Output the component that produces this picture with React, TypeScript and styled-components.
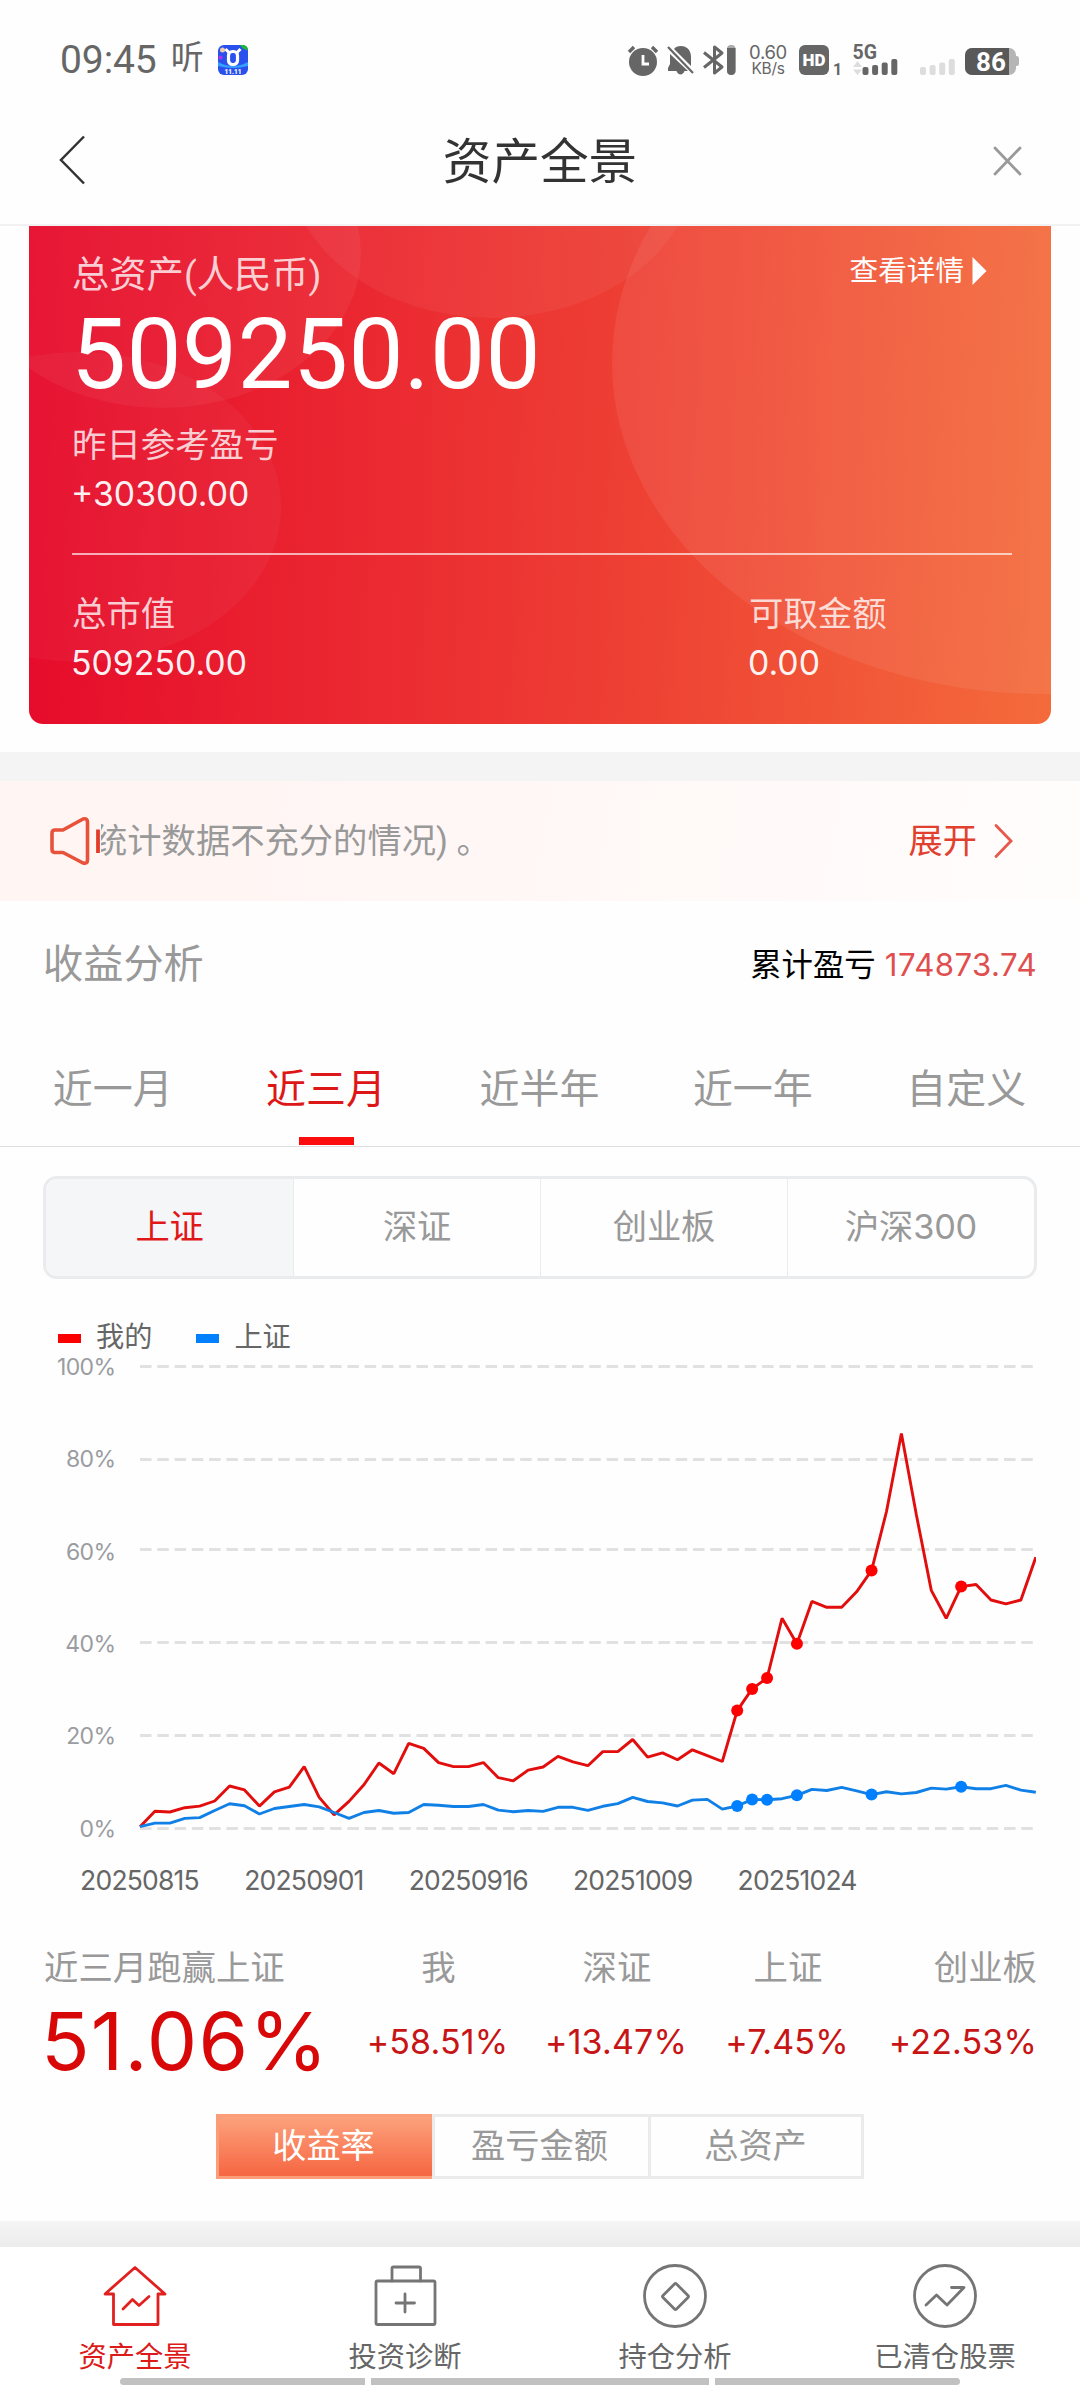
import React from "react";
import styled, { createGlobalStyle, css } from "styled-components";

const GlobalStyle = createGlobalStyle`
  * { box-sizing: border-box; }
  body {
    margin: 0;
    background: #fefefe;
    font-family: Roboto, "Noto Sans CJK SC", sans-serif;
    font-weight: 400;
  }
`;

const figures = css`
  font-family: Inter, "Noto Sans CJK SC", sans-serif;
`;

const Screen = styled.main`
  position: relative;
  display: flex;
  flex-direction: column;
  width: 1080px;
  height: 2388px;
  overflow: hidden;
  background: #fefefe;
  white-space: nowrap;
`;

/* ---------- status bar ---------- */

const StatusBar = styled.div`
  display: flex;
  align-items: center;
  height: 119px;
  padding: 0 61px 0 60px;
  color: #666;
`;

const Clock = styled.span`
  font-size: 39px;
  line-height: 40px;
  letter-spacing: -0.1px;
`;

const Listen = styled.span`
  margin: -4px 0 0 14px;
  width: 33px;
  font-size: 33px;
  line-height: 40px;
  font-weight: 400;
`;

const StatusIcon = styled.svg<{ $gap: number }>`
  flex: none;
  display: block;
  height: 32px;
  margin-left: ${(p) => p.$gap}px;
  fill: #666;
  overflow: visible;
`;

const StatusSpacer = styled.span`
  flex: 1;
`;

const NetSpeed = styled.div`
  ${figures}
  display: flex;
  flex-direction: column;
  align-items: center;
  width: 40px;
  margin-left: 12px;
  font-size: 18.5px;
  line-height: 17px;
  letter-spacing: -0.3px;
`;

const NetUnit = styled.span`
  font-size: 15.5px;
  line-height: 15px;
`;

/* ---------- header ---------- */

const Header = styled.header`
  display: grid;
  grid-template-columns: 150px 1fr 150px;
  align-items: center;
  height: 107px;
  padding-bottom: 24px;
  border-bottom: 2px solid #f2f2f2;
`;

const Title = styled.h1`
  margin: 6px 0 0;
  color: #333;
  font-size: 48.6px;
  line-height: 60px;
  font-weight: 400;
  text-align: center;
`;

const BackIcon = styled.svg`
  display: block;
  margin-left: 58px;
`;

const CloseIcon = styled.svg`
  display: block;
  margin: 3px 0 0 63px;
`;

/* ---------- asset card ---------- */

const Card = styled.section`
  position: relative;
  flex: none;
  height: 498px;
  margin: 0 29px 28px;
  overflow: hidden;
  border-radius: 0 0 14px 14px;
  color: #fff;
  background: linear-gradient(92deg, #e60a2b 0%, #eb2a31 35%, #ee4334 62%, #f46b3b 100%);
`;

const CardArt = styled.svg`
  position: absolute;
  inset: 0;
`;

const CardBody = styled.div`
  position: relative;
  padding: 24px 39px 0 43px;
`;

const CardTop = styled.div`
  display: flex;
  justify-content: space-between;
  height: 50px;
`;

const CardLabel = styled.div<{ $large?: boolean }>`
  height: 50px;
  line-height: 50px;
  font-size: ${(p) => (p.$large ? 37.3 : 34.4)}px;
  color: rgba(255, 255, 255, 0.78);
`;

const DetailLink = styled.div`
  display: flex;
  align-items: center;
  gap: 8px;
  height: 42px;
  margin-right: 25px;
  font-size: 28.6px;
  line-height: 42px;
`;

const Total = styled.div`
  height: 110px;
  margin: 0 0 10px -1px;
  font-size: 98px;
  line-height: 110px;
  letter-spacing: 0.4px;
`;

const CardValue = styled.div`
  ${figures}
  height: 48px;
  margin-left: -1px;
  font-size: 33.8px;
  line-height: 48px;
  color: rgba(255, 255, 255, 0.95);
`;

const CardRule = styled.div`
  height: 2px;
  margin: 35px 0 34px;
  background: rgba(255, 255, 255, 0.65);
`;

const CardColumns = styled.div`
  display: grid;
  grid-template-columns: 677px 1fr;
`;

/* ---------- notice ---------- */

const Band = styled.div<{ $height: number; $shade?: boolean }>`
  flex: none;
  height: ${(p) => p.$height}px;
  background: ${(p) => (p.$shade ? "linear-gradient(#f5f5f5, #ececec)" : "#f4f4f4")};
`;

const Notice = styled.div`
  display: flex;
  align-items: center;
  height: 120px;
  padding: 0 66px 0 48px;
  background: linear-gradient(100deg, #fff5f2 0%, #fff7f6 45%, #fffdfc 100%);
`;

const NoticeClip = styled.div`
  flex: 1;
  display: flex;
  overflow: hidden;
  margin-left: 1px;
`;

const NoticeText = styled.span`
  margin-left: -8px;
  color: #999;
  font-size: 34.3px;
  line-height: 56px;
`;

const Expand = styled.span`
  display: flex;
  align-items: center;
  gap: 17px;
  color: #e2402e;
  font-size: 34.2px;
  line-height: 56px;
`;

/* ---------- analysis ---------- */

const SectionHead = styled.div`
  display: flex;
  align-items: center;
  justify-content: space-between;
  height: 128px;
  padding: 0 43px 0 43px;
`;

const SectionTitle = styled.h2`
  margin: 0;
  color: #999;
  font-size: 40.2px;
  line-height: 60px;
  font-weight: 400;
`;

const Profit = styled.div`
  color: #000;
  font-size: 31.4px;
  line-height: 60px;

  em {
    ${figures}
    margin-left: 9px;
    color: #e04f4f;
    font-style: normal;
    font-size: 31.2px;
    letter-spacing: 0.45px;
  }
`;

const Tabs = styled.nav`
  display: grid;
  grid-template-columns: repeat(5, 213.4px);
  justify-content: center;
  height: 118px;
  padding-right: 1px;
  border-bottom: 1px solid #dedede;
`;

const Tab = styled.div<{ $active?: boolean }>`
  display: flex;
  flex-direction: column;
  align-items: center;
  justify-content: space-between;
  padding: 33px 0 1px;
  font-size: 40px;
  line-height: 56px;
  color: ${(p) => (p.$active ? "#dd1717" : "#999")};

  ${(p) =>
    p.$active &&
    css`
      &::after {
        content: "";
        width: 55px;
        height: 8px;
        background: #fb0d0d;
      }
    `}
`;

const Segments = styled.div`
  display: grid;
  grid-template-columns: repeat(4, 1fr);
  flex: none;
  height: 103px;
  margin: 29px 43px 0;
  overflow: hidden;
  border: 3px solid #e9ebec;
  border-radius: 14px;
`;

const Segment = styled.div<{ $active?: boolean }>`
  ${figures}
  padding-top: 1px;
  text-align: center;
  font-size: 34.3px;
  line-height: 94px;
  letter-spacing: -0.2px;
  color: ${(p) => (p.$active ? "#e11818" : "#999")};
  background: ${(p) => (p.$active ? "#f4f6f8" : "transparent")};

  & + & {
    border-left: 1px solid #ebebeb;
  }
`;

/* ---------- chart ---------- */

const ChartBlock = styled.section`
  flex: none;
  height: 639px;
  padding-top: 39px;
`;

const Legend = styled.div`
  display: flex;
  gap: 44px;
  height: 39px;
  padding-left: 58px;
`;

const LegendItem = styled.span<{ $color: string }>`
  display: flex;
  align-items: center;
  gap: 15px;
  height: 40px;
  color: #666;
  font-size: 28.2px;
  line-height: 40px;

  &::before {
    content: "";
    width: 23px;
    height: 9px;
    background: ${(p) => p.$color};
  }
`;

const ChartSvg = styled.svg`
  display: block;
  overflow: visible;
  font-family: Inter, sans-serif;
`;

/* ---------- results ---------- */

const Results = styled.section`
  display: flex;
  flex: none;
  height: 156px;
  padding: 23px 43px 0 44px;
`;

const Result = styled.div<{ $width: number; $align?: string }>`
  width: ${(p) => p.$width}px;
  display: flex;
  flex-direction: column;
  align-items: ${(p) => p.$align ?? "center"};
`;

const ResultLabel = styled.div`
  height: 54px;
  color: #999;
  font-size: 34.4px;
  line-height: 54px;
`;

const ResultValue = styled.div`
  ${figures}
  height: 94px;
  margin-left: -2px;
  color: #c71414;
  font-size: 34px;
  line-height: 93px;
  letter-spacing: 0.15px;
`;

const MainValue = styled.div`
  ${figures}
  height: 94px;
  margin-left: -3px;
  color: #d90808;
  font-size: 80px;
  line-height: 92px;
  letter-spacing: 1.2px;
`;

const Modes = styled.div`
  display: grid;
  grid-template-columns: repeat(3, 216px);
  align-self: center;
  flex: none;
  height: 64px;
  margin: 40px 0 43px;
`;

const Mode = styled.div<{ $active?: boolean }>`
  padding-right: 4px;
  border: 3px solid #ebebeb;
  border-right-width: 0;
  text-align: center;
  font-size: 34.2px;
  line-height: 59px;
  color: #999;

  &:last-child {
    padding-right: 1px;
    border-right-width: 3px;
  }

  ${(p) =>
    p.$active &&
    css`
      color: #fff;
      border-color: #fb9d79;
      background: linear-gradient(#fca27c, #f66642);
    `}
`;

/* ---------- bottom navigation ---------- */

const BottomNav = styled.nav`
  display: grid;
  grid-template-columns: repeat(4, 270px);
  flex: 1;
  background: #fff;
`;

const NavItem = styled.div<{ $active?: boolean }>`
  display: flex;
  flex-direction: column;
  align-items: center;
  padding-top: 15px;
  color: ${(p) => (p.$active ? "#dc1a1a" : "#666")};
  font-size: 28.3px;
  line-height: 44px;

  svg {
    display: block;
    margin-bottom: 6px;
    fill: none;
    stroke: ${(p) => (p.$active ? "#e12020" : "#757575")};
    stroke-width: 2.8;
    stroke-linejoin: round;
    stroke-linecap: round;
  }
`;

const GestureBar = styled.div`
  position: absolute;
  left: 120px;
  bottom: 3px;
  display: grid;
  grid-template-columns: 245px 338px 245px;
  gap: 6px;
  height: 7px;
`;

const GesturePart = styled.span`
  background: #c1c1c1;

  &:first-child { border-radius: 4px 0 0 4px; }
  &:last-child { border-radius: 0 4px 4px 0; }
`;

/* ---------- data ---------- */

const mine = [
  1826.7, 1811.3, 1812, 1807.7, 1806.1, 1801, 1786, 1789.9, 1806.1, 1791.9, 1787.2, 1766.6, 1797.4,
  1814.8, 1801.4, 1784.8, 1763, 1773.7, 1743.3, 1748.4, 1762.6, 1766.6, 1766.6, 1762.6, 1777.7, 1780.8,
  1770.1, 1767, 1756.4, 1761.9, 1765.7, 1751.6, 1751.6, 1739.5, 1757.1, 1752.9, 1759.8, 1749.8, 1755.7,
  1761.5, 1710.6, 1688.9, 1677.9, 1618.3, 1643.8, 1601.4, 1607.3, 1607.3, 1591.8, 1570.4, 1511.5,
  1433.4, 1515, 1590.4, 1618.3, 1586.6, 1584.5, 1600, 1603.8, 1600, 1557.3,
];

const index = [
  1826.7, 1823.1, 1823.1, 1818.4, 1817.6, 1810.5, 1803.8, 1805.7, 1814, 1808.5, 1806.5, 1804.5, 1806.9,
  1812.5, 1818.4, 1812.5, 1810.5, 1813.2, 1812.5, 1804.5, 1805.3, 1806.5, 1806.5, 1804.5, 1810.1,
  1811.7, 1810.5, 1811.4, 1807.3, 1807.3, 1810.4, 1806.3, 1803.6, 1797.4, 1801.5, 1802.9, 1806, 1800.1,
  1799.4, 1809.1, 1806, 1799.4, 1799.8, 1798.7, 1795.3, 1789.4, 1790.5, 1787.4, 1790.8, 1794.6, 1791.8,
  1793.9, 1792.5, 1788.1, 1789.1, 1786.7, 1788.7, 1788.7, 1785.3, 1790.1, 1792.2,
];

const trades = [40, 41, 42, 44, 49, 55];
const gridLines = [1366.5, 1459.5, 1549.5, 1642.5, 1735.5, 1828.5];
const ticks = ["100%", "80%", "60%", "40%", "20%", "0%"];
const dates = ["20250815", "20250901", "20250916", "20251009", "20251024"];

const chartTop = 1357;
const px = (i: number) => 140 + i * 14.93;
const toPoints = (values: number[]) =>
  values.map((v, i) => `${px(i).toFixed(1)},${(v - chartTop).toFixed(1)}`).join(" ");

const Chart = () => (
  <ChartSvg width="1080" height="561" viewBox="0 0 1080 561">
    {gridLines.map((y, i) => (
      <React.Fragment key={y}>
        <line x1="140" x2="1036" y1={y - chartTop} y2={y - chartTop} stroke="#e1e1e1" strokeWidth="3" strokeDasharray="11.52 5.76" />
        <text x="115.500" y={1375 + i * 92.3 - chartTop} textAnchor="end" fontSize="23" letterSpacing="-0.600" fill="#9a9ca1">
          {ticks[i]}
        </text>
      </React.Fragment>
    ))}
    {dates.map((d, i) => (
      <text key={d} x={139.5 + i * 164.4} y={1890 - chartTop} textAnchor="middle" fontSize="26.500" letterSpacing="-0.800" fill="#666">
        {d}
      </text>
    ))}
    <svg x="0" y="0" width="1036" height="561">
      <polyline points={toPoints(mine)} fill="none" stroke="#e20d0d" strokeWidth="2.9" strokeLinejoin="bevel" />
      <polyline points={toPoints(index)} fill="none" stroke="#1180e6" strokeWidth="2.9" strokeLinejoin="bevel" />
      {trades.map((i) => (
        <React.Fragment key={i}>
          <circle cx={px(i)} cy={mine[i] - chartTop} r="6" fill="#ff0000" />
          <circle cx={px(i)} cy={index[i] - chartTop} r="6" fill="#0080ff" />
        </React.Fragment>
      ))}
    </svg>
  </ChartSvg>
);

const StatusIcons = () => (
  <>
    <StatusIcon $gap={0} width="32" viewBox="0 0 32 32">
      <circle cx="16" cy="18" r="14" />
      <path d="M2 8 L7 3 M25 3 L30 8" stroke="#666" strokeWidth="3.4" />
      <path d="M16 11 V20 H22" fill="none" stroke="#fff" strokeWidth="2.8" />
    </StatusIcon>
    <StatusIcon $gap={7} width="30" viewBox="0 0 30 32">
      <path d="M8 5 C11 0 25 0 25 13 V22 Z" />
      <path d="M4 10 L22 27 H18.500 C17 31.500 12 31.500 10.500 27 H2 V24 L4 20 Z" />
      <path d="M2 3 L27 29" stroke="#666" strokeWidth="2.2" />
    </StatusIcon>
    <StatusIcon $gap={6} width="34" viewBox="0 0 34 32">
      <path d="M2 8.500 L20 23 L12.500 29 V3 L20 9 L2 23.500" fill="none" stroke="#666" strokeWidth="3" strokeLinejoin="round" />
      <rect x="25" y="1" width="8.500" height="30" rx="4" fill="#aaa" />
      <path d="M25 4 H33.500 V27 A4.200 4 0 0 1 25 27 Z" />
    </StatusIcon>
    <NetSpeed>
      <span>0.60</span>
      <NetUnit>KB/s</NetUnit>
    </NetSpeed>
    <StatusIcon $gap={11} width="42" viewBox="0 0 42 32">
      <rect x="0" y="1" width="30" height="30" rx="6" />
      <text x="15" y="22" textAnchor="middle" fontSize="17" fontWeight="900" fill="#fff">HD</text>
      <text x="34" y="31" fontSize="16" fontWeight="700">1</text>
    </StatusIcon>
    <StatusIcon $gap={12} width="46" viewBox="0 0 46 32">
      <text x="-0.500" y="15" fontSize="19.500" fontWeight="700">5G</text>
      <path d="M0 23 L4.500 17 L9 23 Z M0 25.500 H9 L4.500 31 Z" fill="#ddd" />
      {[23, 21, 18.5, 15].map((y, i) => (
        <rect key={y} x={9.5 + i * 9.6} y={y} width="6" height={31 - y} rx="2" />
      ))}
    </StatusIcon>
    <StatusIcon $gap={21} width="36" viewBox="0 0 36 32">
      {[23, 21, 18.5, 15].map((y, i) => (
        <rect key={y} x={i * 9.6} y={y} width="6" height={31 - y} rx="2" fill="#ddd" />
      ))}
    </StatusIcon>
    <StatusIcon $gap={9} width="54" viewBox="0 0 54 32">
      <rect x="0" y="4" width="51" height="27" rx="7" fill="#b5b5b5" />
      <rect x="49" y="12" width="5" height="10" rx="2.500" fill="#b5b5b5" />
      <path d="M7 4 H44 V31 H7 A7 7 0 0 1 0 24 V11 A7 7 0 0 1 7 4 Z" fill="#595959" />
      <text x="26" y="27" textAnchor="middle" fontSize="26" fontWeight="700" fill="#fff">86</text>
    </StatusIcon>
  </>
);

export default function App() {
  return (
    <>
      <GlobalStyle />
      <Screen>
        <StatusBar>
          <Clock>09:45</Clock>
          <Listen>听</Listen>
          <StatusIcon $gap={14} width="30" viewBox="0 0 30 32">
            <rect x="0" y="1" width="30" height="30" rx="6" fill="#2a50ee" />
            <path d="M0 18 Q15 26 30 18 V22 Q15 26 0 22 Z" fill="#35a0ff" />
            <path d="M22 1 H26 Q30 2 30 6 Q25 6 22 1 Z" fill="#1fb53a" />
            <circle cx="4.500" cy="6" r="2.500" fill="#efc9b0" />
            <circle cx="2.500" cy="13.500" r="2" fill="#bd2de0" />
            <rect x="10.500" y="7.500" width="9" height="13" rx="4" fill="#2a50ee" stroke="#fff" strokeWidth="3.200" />
            <path d="M7.500 5 L11 8.500 M22.500 5 L19 8.500" stroke="#fff" strokeWidth="3" />
            <text x="15" y="29.500" textAnchor="middle" fontSize="6.500" fontWeight="900" fill="#fff">11.11</text>
          </StatusIcon>
          <StatusSpacer />
          <StatusIcons />
        </StatusBar>

        <Header>
          <BackIcon width="28" height="50" viewBox="0 0 28 50">
            <path d="M26 1.500 L3 25 L26 48.500" fill="none" stroke="#333" strokeWidth="2.500" />
          </BackIcon>
          <Title>资产全景</Title>
          <CloseIcon width="30" height="30" viewBox="0 0 30 30">
            <path d="M2 2 L27 28 M27 2 L2 28" stroke="#999" strokeWidth="2.800" strokeLinecap="round" />
          </CloseIcon>
        </Header>

        <Card>
          <CardArt width="1022" height="498" viewBox="29 226 1022 498">
            <g fill="#fff">
              <ellipse cx="162" cy="253" rx="199" ry="155" fillOpacity="0.05" />
              <ellipse cx="492" cy="161" rx="204" ry="157" fillOpacity="0.05" />
              <ellipse cx="79" cy="507" rx="202" ry="155" fillOpacity="0.04" />
              <ellipse cx="1045" cy="363" rx="433" ry="331" fillOpacity="0.07" />
            </g>
          </CardArt>
          <CardBody>
            <CardTop>
              <CardLabel $large>总资产(人民币)</CardLabel>
              <DetailLink>
                查看详情
                <svg width="15" height="30" viewBox="0 0 15 30">
                  <path d="M0.500 1 L14.500 15 L0.500 29 Z" fill="#fff" />
                </svg>
              </DetailLink>
            </CardTop>
            <Total>509250.00</Total>
            <CardLabel>昨日参考盈亏</CardLabel>
            <CardValue>+30300.00</CardValue>
            <CardRule />
            <CardColumns>
              <div>
                <CardLabel>总市值</CardLabel>
                <CardValue>509250.00</CardValue>
              </div>
              <div>
                <CardLabel>可取金额</CardLabel>
                <CardValue>0.00</CardValue>
              </div>
            </CardColumns>
          </CardBody>
        </Card>

        <Band $height={29} />

        <Notice>
          <svg width="52" height="52" viewBox="0 0 52 52">
            <path
              d="M4 18 Q4 15 7 15 H15 L35 4 Q39.500 3 39.500 7 V45 Q39.500 49 35 48 L15 37.500 H7 Q4 37.500 4 34.500 Z"
              fill="none"
              stroke="#e8513a"
              strokeWidth="3.600"
              strokeLinejoin="round"
            />
            <path d="M50 14.500 V38" stroke="#e23b2c" strokeWidth="3.800" />
          </svg>
          <NoticeClip>
            <NoticeText>统计数据不充分的情况) 。</NoticeText>
          </NoticeClip>
          <Expand>
            展开
            <svg width="20" height="36" viewBox="0 0 20 36">
              <path d="M2 2.500 L17 18 L2 33.500" fill="none" stroke="#e8574a" strokeWidth="2.800" strokeLinecap="round" />
            </svg>
          </Expand>
        </Notice>

        <SectionHead>
          <SectionTitle>收益分析</SectionTitle>
          <Profit>
            累计盈亏<em>174873.74</em>
          </Profit>
        </SectionHead>

        <Tabs>
          <Tab>近一月</Tab>
          <Tab $active>近三月</Tab>
          <Tab>近半年</Tab>
          <Tab>近一年</Tab>
          <Tab>自定义</Tab>
        </Tabs>

        <Segments>
          <Segment $active>上证</Segment>
          <Segment>深证</Segment>
          <Segment>创业板</Segment>
          <Segment>沪深300</Segment>
        </Segments>

        <ChartBlock>
          <Legend>
            <LegendItem $color="#fb0000">我的</LegendItem>
            <LegendItem $color="#0080ff">上证</LegendItem>
          </Legend>
          <Chart />
        </ChartBlock>

        <Results>
          <Result $width={302} $align="flex-start">
            <ResultLabel>近三月跑赢上证</ResultLabel>
            <MainValue>51.06%</MainValue>
          </Result>
          <Result $width={185}>
            <ResultLabel>我</ResultLabel>
            <ResultValue>+58.51%</ResultValue>
          </Result>
          <Result $width={172}>
            <ResultLabel>深证</ResultLabel>
            <ResultValue>+13.47%</ResultValue>
          </Result>
          <Result $width={170}>
            <ResultLabel>上证</ResultLabel>
            <ResultValue>+7.45%</ResultValue>
          </Result>
          <Result $width={164} $align="flex-end">
            <ResultLabel>创业板</ResultLabel>
            <ResultValue>+22.53%</ResultValue>
          </Result>
        </Results>

        <Modes>
          <Mode $active>收益率</Mode>
          <Mode>盈亏金额</Mode>
          <Mode>总资产</Mode>
        </Modes>

        <Band $height={26} $shade />

        <BottomNav>
          <NavItem $active>
            <svg width="68" height="68" viewBox="0 0 68 68">
              <path d="M34 5.500 L64 32 H57 V62.500 H12.500 V32 H4 Z" />
              <path d="M22 47 L31.500 37.500 L38 43.500 L48 34.500" />
            </svg>
            资产全景
          </NavItem>
          <NavItem>
            <svg width="68" height="68" viewBox="0 0 68 68">
              <rect x="5" y="19" width="59" height="43.500" rx="1.500" />
              <path d="M21 19 V6.500 Q21 5 22.500 5 H48 Q49.500 5 49.500 6.500 V19 M34 32 V50 M25 41 H43.500" />
            </svg>
            投资诊断
          </NavItem>
          <NavItem>
            <svg width="68" height="68" viewBox="0 0 68 68">
              <circle cx="34" cy="34" r="30.500" />
              <path d="M33.500 22 Q34.500 21 35.500 22 L47 33.500 Q48 34.500 47 35.500 L35.500 47 Q34.500 48 33.500 47 L22 35.500 Q21 34.500 22 33.500 Z" />
            </svg>
            持仓分析
          </NavItem>
          <NavItem>
            <svg width="68" height="68" viewBox="0 0 68 68">
              <circle cx="34" cy="34" r="30.500" />
              <path d="M15 43 L25.500 33 L36 43 L53 25.500 H40.500" />
            </svg>
            已清仓股票
          </NavItem>
        </BottomNav>

        <GestureBar>
          <GesturePart />
          <GesturePart />
          <GesturePart />
        </GestureBar>
      </Screen>
    </>
  );
}
